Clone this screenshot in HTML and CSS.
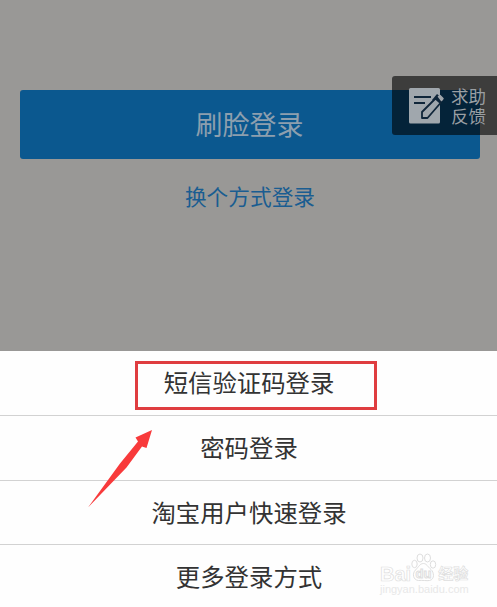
FILE: index.html
```
<!DOCTYPE html>
<html lang="zh-CN">
<head>
	<meta charset="utf-8">
	<title>登录</title>
	<link rel="stylesheet" href="styles.css">
</head>
<body>
	<div class="login">
		<button class="face-login">刷脸登录</button>
		<a class="switch-login">换个方式登录</a>
	</div>
	<div class="feedback">
		<svg class="feedback-icon" width="36" height="38" viewBox="0 0 36 38">
			<rect x="1" y="1" width="31" height="35.500" rx="1.500" fill="#a0a7ad"/>
			<path d="M6 10h17M6 16h11" stroke="#10263a" stroke-width="2"/>
			<path d="M24 13l5-6 7 5.500-4 4z" fill="#10263a"/>
			<path d="M14 31v-6L27.500 11.500l5 4.500L19.500 31z" fill="#a0a7ad" stroke="#10263a" stroke-width="1.800" stroke-linejoin="round"/>
			<path d="M30.500 9.500l1.500-1 3 3-1.500 2z" fill="#a0a7ad" stroke="#a0a7ad" stroke-width="1.500" stroke-linejoin="round"/>
		</svg>
		<div class="feedback-text">
			<div>求助</div>
			<div>反馈</div>
		</div>
	</div>
	<ul class="sheet">
		<li>短信验证码登录</li>
		<li>密码登录</li>
		<li>淘宝用户快速登录</li>
		<li>更多登录方式</li>
	</ul>
	<div class="highlight"></div>
	<svg class="arrow" width="66" height="80" viewBox="0 0 66 80">
		<path d="M65 1L48.500 8.500 51 12.500 33 34.500 1 78.500 39.500 38.500 55 17.500 59.500 19z" fill="#f83a3b"/>
	</svg>
	<div class="watermark">
		<div class="brand">
			<span>Bai</span>
			<svg width="26" height="29" viewBox="0 0 26 29">
				<g fill="#fff" stroke="#dedede">
					<ellipse cx="3.500" cy="11" rx="2.700" ry="3.700"/>
					<ellipse cx="9" cy="5" rx="3" ry="4"/>
					<ellipse cx="16.500" cy="5" rx="3" ry="4"/>
					<ellipse cx="22" cy="11.500" rx="2.700" ry="3.700"/>
					<path d="M12.500 10.500c3 0 4.500 3.500 7.500 6s4 10-1.500 11c-3 .5-7-.5-11 0-5.500-.5-6.500-7-3-10.500S9 10.500 12.500 10.500z"/>
				</g>
				<text x="12.500" y="25" text-anchor="middle">du</text>
			</svg>
			<span class="brand-cn">经验</span>
		</div>
		<div class="site">jingyan.baidu.com</div>
	</div>
</body>
</html>
```
FILE: styles.css
```
* {
	box-sizing: border-box;
}
body {
	margin: 0;
	position: relative;
	height: 607px;
	overflow: hidden;
	background-color: #999896;
	font-family: "Noto Sans CJK SC", sans-serif;
}
.login {
	display: flex;
	flex-direction: column;
	align-items: center;
	height: 351px;
	padding: 90px 17px 0 20px;
}
.face-login {
	width: 100%;
	height: 69px;
	padding: 0 1px 3px 0;
	border: none;
	border-radius: 3px;
	background-color: #0b588f;
	color: #8d9fae;
	font-family: inherit;
	font-size: 27px;
}
.switch-login {
	margin-top: 21px;
	color: #1a5d91;
	font-size: 21.700px;
	line-height: 32px;
}
.feedback {
	position: absolute;
	top: 76px;
	right: 0;
	display: flex;
	width: 105px;
	height: 59px;
	padding: 11px 0 0 16px;
	border-radius: 3px 0 0 3px;
	background-color: rgba(0, 0, 0, 0.6);
	color: #9a9fa3;
	font-size: 17.500px;
	line-height: 20px;
}
.feedback-icon {
	margin-right: 7px;
}
.feedback-text {
	margin-top: -1px;
}
.sheet {
	margin: 0;
	padding: 0.400px 0 0;
	height: 256px;
	list-style: none;
	background-color: #fefefe;
	color: #333;
	font-size: 24.400px;
	text-align: center;
}
.sheet li {
	height: 64.600px;
	padding-left: 1px;
	border-bottom: 1px solid #d2d2d2;
	line-height: 61px;
}
.sheet li:last-child {
	border-bottom: none;
}
.highlight {
	position: absolute;
	top: 361px;
	left: 135px;
	width: 242px;
	height: 49px;
	border: 3px solid #df3d40;
}
.arrow {
	position: absolute;
	top: 429px;
	left: 87px;
}
.watermark {
	position: absolute;
	top: 553px;
	left: 380px;
	width: 92px;
	color: #fff;
	font-family: "Liberation Sans", "Noto Sans CJK SC", sans-serif;
}
.brand {
	display: flex;
	align-items: flex-end;
	height: 29px;
	font-size: 20px;
	font-weight: bold;
	line-height: 16px;
	-webkit-text-stroke: 0.700px #dedede;
}
.brand svg {
	flex: none;
}
.brand text {
	fill: #fff;
	stroke: #dedede;
	font-size: 13px;
}
.brand-cn {
	margin-left: 1px;
	font-size: 15px;
}
.site {
	color: #e8e8e8;
	font-size: 11px;
	line-height: 14px;
}
```
